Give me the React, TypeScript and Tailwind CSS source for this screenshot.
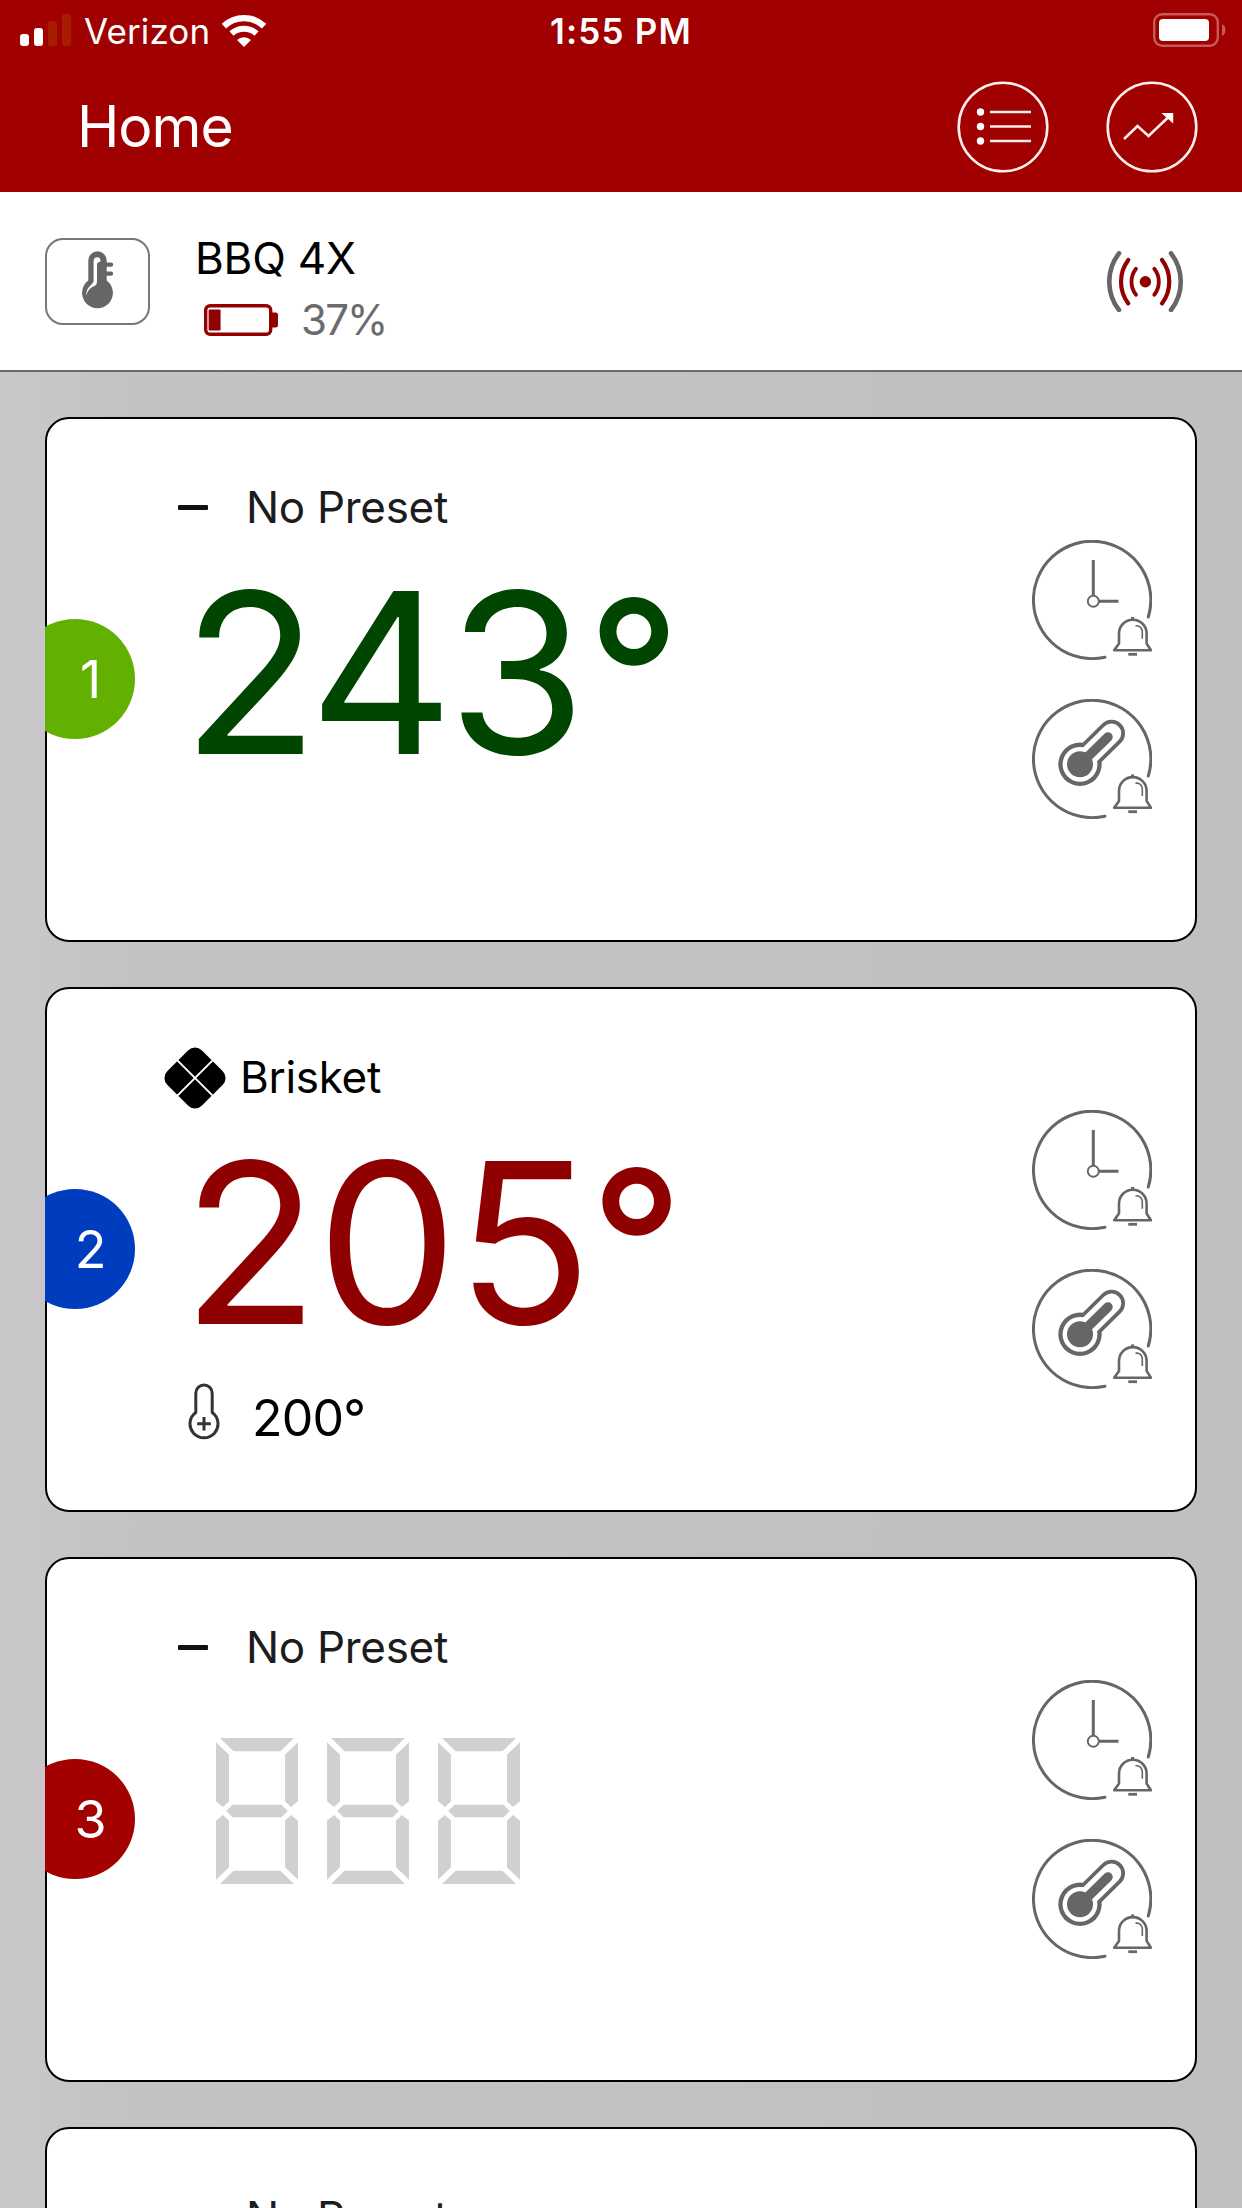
import { clsx } from 'clsx'

const PROBES = [
  {
    id: 1,
    preset: null,
    reading: '243',
    target: null,
    badge: 'bg-[#62b000]',
    color: 'text-[#004500]',
    spacing: 'tracking-[-6px] mr-[7px]',
  },
  {
    id: 2,
    preset: 'Brisket',
    reading: '205',
    target: '200',
    badge: 'bg-[#003cbe]',
    color: 'text-[#8f0000]',
    spacing: 'tracking-[-2px]',
  },
  {
    id: 3,
    preset: null,
    reading: null,
    target: null,
    badge: 'bg-[#a30000]',
    color: '',
    spacing: '',
  },
  {
    id: 4,
    preset: null,
    reading: null,
    target: null,
    badge: 'bg-[#a30000]',
    color: '',
    spacing: '',
  },
]

function SignalBars() {
  return (
    <div className="flex items-end gap-[5px] h-8">
      <span className="w-[9px] h-3 rounded-[3px] bg-white" />
      <span className="w-[9px] h-[18px] rounded-[3px] bg-white" />
      <span className="w-[9px] h-[25px] rounded-[3px] bg-[#a81c00]" />
      <span className="w-[9px] h-8 rounded-[3px] bg-[#a81c00]" />
    </div>
  )
}

function WifiIcon() {
  return (
    <svg width="46" height="34" viewBox="0 0 46 34" fill="none" stroke="#fff">
      <path d="M2.9 13.1A29.3 29.3 0 0 1 43.1 13.1" strokeWidth="6.4" />
      <path d="M10.4 20.6A18.8 18.8 0 0 1 35.6 20.6" strokeWidth="6" />
      <path d="M23 34L16 27A10 10 0 0 1 30 27Z" fill="#fff" stroke="none" />
    </svg>
  )
}

function PhoneBattery() {
  return (
    <svg width="73" height="34" viewBox="0 0 73 34">
      <rect x="1.2" y="1.2" width="63.6" height="31.6" rx="8" fill="none" stroke="#c65a55" strokeWidth="2.4" />
      <rect x="6" y="6" width="50" height="22" rx="4" fill="#fff" />
      <path d="M69 11q3.5 2 3.5 6t-3.5 6z" fill="#c65a55" />
    </svg>
  )
}

function ListIcon() {
  return (
    <svg width="92" height="92" viewBox="0 0 92 92" fill="none" stroke="#fdeeee" strokeWidth="2.6">
      <circle cx="46" cy="46" r="44.3" />
      {[31, 45.5, 60].map((y) => (
        <g key={y}>
          <circle cx="23.5" cy={y} r="3.7" fill="#fff" stroke="none" />
          <path d={`M33 ${y}H74`} />
        </g>
      ))}
    </svg>
  )
}

function TrendIcon() {
  return (
    <svg width="92" height="92" viewBox="0 0 92 92" fill="none" stroke="#fdeeee" strokeWidth="2.6">
      <circle cx="46" cy="46" r="44.3" />
      <path d="M18 58L31.5 45L42.5 55L62.5 36" />
      <path d="M55.4 32H67.2V42.5Z" fill="#fff" stroke="none" />
    </svg>
  )
}

function DeviceThermometer() {
  return (
    <svg width="34" height="60" viewBox="0 0 34 60" fill="#666">
      <path d="M8.3 9.5a9.2 9.2 0 0 1 18.4 0V29.5A15.4 15.4 0 1 1 8.3 29.5Z" />
      <path d="M24 13.6H31M24 22.6H31" stroke="#666" strokeWidth="4.4" strokeLinecap="round" />
      <path
        d="M17.3 6.2A3.8 3.8 0 0 0 13.6 10V30Q13.4 32.4 10.5 34.6Q5.6 39 6.4 44.5Q7.5 37.5 15.4 34.6Q17 33.4 17 30.5V13Q17.6 10.8 20.6 10.6Q20.6 6.2 17.3 6.2Z"
        fill="#fff"
      />
    </svg>
  )
}

function DeviceBattery() {
  return (
    <svg width="74" height="32" viewBox="0 0 74 32" fill="#930000">
      <rect x="1.7" y="1.7" width="65" height="28.6" rx="4.5" fill="none" stroke="#930000" strokeWidth="3.4" />
      <rect x="4.6" y="5.6" width="12" height="20.8" rx="1" />
      <path d="M68 8.5h3.5q2.5 0 2.5 2.5v10q0 2.5 -2.5 2.5H68z" />
    </svg>
  )
}

function BroadcastIcon() {
  return (
    <svg width="77" height="61" viewBox="0 0 77 61" fill="none" stroke="#930000" strokeLinecap="round">
      <circle cx="38.4" cy="30.7" r="5.7" fill="#930000" stroke="none" />
      <path d="M29 17.7A21 21 0 0 0 29 43.7M47.3 17.7A21 21 0 0 1 47.3 43.7" strokeWidth="3.8" />
      <path d="M21.3 9A36 36 0 0 0 21.3 52.4M55 9A36 36 0 0 1 55 52.4" strokeWidth="4.2" />
      <path d="M12 2.4A46 46 0 0 0 12 59M64 2.4A46 46 0 0 1 64 59" stroke="#666" strokeWidth="4.6" />
    </svg>
  )
}

function Bell() {
  return (
    <g>
      <path d="M100.6 77v3" strokeWidth="3" />
      <path
        d="M87 103.5V93.5A13.8 13.8 0 0 1 114.6 93.5V103.5L118.9 110.3H82.2Z"
        strokeWidth="2.6"
        strokeLinejoin="round"
      />
      <path d="M96.3 114.3H105" strokeWidth="2.8" />
      <path d="M103.5 85.7h2q4.8 1.5 4.8 6v7" strokeWidth="1.6" />
    </g>
  )
}

function TimerAlarmIcon() {
  return (
    <svg width="120" height="120" viewBox="0 0 120 120" fill="none" stroke="#666">
      <path d="M116.3 77A58.7 58.7 0 1 0 73 117.2" strokeWidth="3" strokeLinecap="round" />
      <circle cx="61.3" cy="61.3" r="5.5" strokeWidth="1.9" />
      <path d="M61.3 20V55.5M67 61.3H86.5" strokeWidth="3" />
      <Bell />
    </svg>
  )
}

function TempAlarmIcon() {
  return (
    <svg width="120" height="120" viewBox="0 0 120 120" fill="none" stroke="#666">
      <path d="M116.3 77A58.7 58.7 0 1 0 73 117.2" strokeWidth="3" strokeLinecap="round" />
      <g strokeLinecap="round">
        <circle cx="48" cy="65.3" r="21.7" fill="#666" stroke="none" />
        <path d="M48 65.3L79.5 34.3" strokeWidth="27" />
        <circle cx="48" cy="65.3" r="17.4" fill="#fff" stroke="none" />
        <path d="M48 65.3L79.5 34.3" stroke="#fff" strokeWidth="19.5" />
        <circle cx="48" cy="65.3" r="13" fill="#666" stroke="none" />
        <path d="M48 65.3L76 38" strokeWidth="9.5" />
      </g>
      <g transform="translate(0 -1.6)">
        <Bell />
      </g>
    </svg>
  )
}

function BrisketIcon() {
  return (
    <svg width="62" height="62" viewBox="0 0 62 62">
      <g transform="rotate(45 31 31)">
        <rect x="6.6" y="6.6" width="48.8" height="48.8" rx="9.5" />
        <path d="M31 5V57M5 31H57" stroke="#fff" strokeWidth="2" />
      </g>
    </svg>
  )
}

function TargetIcon() {
  return (
    <svg width="32" height="58" viewBox="0 0 32 58" fill="none" stroke="#333" strokeWidth="3">
      <path d="M7.8 10.2a8.2 8.2 0 0 1 16.4 0V29.5A14 14 0 1 1 7.8 29.5Z" strokeLinejoin="round" />
      <path d="M16 34V47.6M9.2 40.8H22.8" />
    </svg>
  )
}

// One unlit seven segment digit
function BlankDigit() {
  return (
    <svg width="82" height="146" viewBox="0 0 82 146" fill="#d0d0d0">
      <path d="M4 0H78L64.5 13.3H17.5Z" />
      <path d="M0 4.3L13 16.7V63.3L7 69L0 63.3Z" />
      <path d="M82 4.3L69 16.7V63.3L75 69L82 63.3Z" />
      <path d="M10.2 73L16.5 66.7H65.5L71.8 73L65.5 79.3H16.5Z" />
      <path d="M0 141.7L13 129.3V82.7L7 77L0 82.7Z" />
      <path d="M82 141.7L69 129.3V82.7L75 77L82 82.7Z" />
      <path d="M4 146H78L64.5 132.7H17.5Z" />
    </svg>
  )
}

function ProbeCard({ probe }: { probe: (typeof PROBES)[number] }) {
  return (
    <div className="relative flex justify-between shrink-0 h-[525px] rounded-[24px] border-2 border-black bg-white">
      {/* numbered tab cut off by the card edge */}
      <div className="absolute -left-[2px] top-[200px] w-[90px] h-[120px] overflow-hidden">
        <div
          className={clsx(
            'ml-[-30px] w-[120px] h-[120px] rounded-full flex items-center justify-center pl-[31px] pt-[2px] text-[52px] text-white',
            probe.badge
          )}
        >
          {probe.id}
        </div>
      </div>

      <div className="flex flex-col pl-[117px] pt-[58px]">
        <div className="flex items-center h-[60px]">
          {probe.preset ? (
            <>
              <div className="pt-[2px]">
                <BrisketIcon />
              </div>
              <span className="ml-[14px] text-[44px] tracking-[-0.3px] text-black">{probe.preset}</span>
            </>
          ) : (
            <>
              <span className="ml-[14px] w-[30px] h-[5px] rounded-[1px] bg-[#111]" />
              <span className="ml-[38px] text-[44px] tracking-[-0.3px] text-[#1c1c1c]">No Preset</span>
            </>
          )}
        </div>

        {probe.reading ? (
          <div className={clsx('flex mt-6 ml-[18px] h-[224px] text-[224px] leading-[224px]', probe.color)}>
            <span className={probe.spacing}>{probe.reading}</span>
            <span className="text-[204px] leading-[224px] font-medium">°</span>
          </div>
        ) : (
          <div className="flex gap-[29px] mt-[61px] ml-[52px]">
            <BlankDigit />
            <BlankDigit />
            <BlankDigit />
          </div>
        )}

        {probe.target && (
          <div className="flex items-center mt-[33px] ml-6 h-[60px]">
            <div className="-mt-3">
              <TargetIcon />
            </div>
            <span className="ml-8 text-[50px] tracking-[-0.8px] text-black">{probe.target}°</span>
          </div>
        )}
      </div>

      <div className="flex flex-col gap-[39px] pt-[121px] pr-[43px]">
        <TimerAlarmIcon />
        <TempAlarmIcon />
      </div>
    </div>
  )
}

export default function App() {
  return (
    <div className="flex flex-col w-[1242px] h-[2208px] overflow-hidden font-['Inter','Liberation_Sans',sans-serif] bg-linear-to-r from-[#cbc8cb] via-[#c4c2c4] via-10% to-[#c1bfc1]">
      <header className="shrink-0 h-48 bg-[#a10000] text-white">
        <div className="grid grid-cols-3 items-center h-[60px] px-5">
          <div className="flex items-center">
            <SignalBars />
            <span className="ml-[13px] mr-[11px] pt-[2px] text-[35px] tracking-[0.1px]">Verizon</span>
            <WifiIcon />
          </div>
          <span className="text-center pt-[2px] text-[35px] font-semibold tracking-[1.2px]">1:55 PM</span>
          <div className="flex justify-end -mr-1">
            <PhoneBattery />
          </div>
        </div>
        <div className="flex items-center h-[134px] pl-[77px] pr-11">
          <h1 className="flex-1 text-[57px] tracking-[-1px]">Home</h1>
          <div className="flex gap-[57px]">
            <ListIcon />
            <TrendIcon />
          </div>
        </div>
      </header>

      <section className="flex items-center shrink-0 h-[180px] pl-[45px] pr-[58px] border-b-2 border-[#6b6b6b] bg-white">
        <div className="flex items-center justify-center w-[105px] h-[87px] rounded-[18px] border-2 border-[#777] pr-[2px]">
          <DeviceThermometer />
        </div>
        <div className="flex-1 ml-[45px] mt-[15px] flex flex-col gap-1">
          <span className="text-[44px] leading-[58px] tracking-[-0.2px]">BBQ 4X</span>
          <div className="flex items-center pl-[9px]">
            <DeviceBattery />
            <span className="ml-[23px] text-[42px] leading-[58px] tracking-[-1.8px] text-[#6b6b6b]">37%</span>
          </div>
        </div>
        <BroadcastIcon />
      </section>

      <main className="flex flex-col gap-[45px] px-[45px] pt-[45px]">
        {PROBES.map((probe) => (
          <ProbeCard key={probe.id} probe={probe} />
        ))}
      </main>
    </div>
  )
}
